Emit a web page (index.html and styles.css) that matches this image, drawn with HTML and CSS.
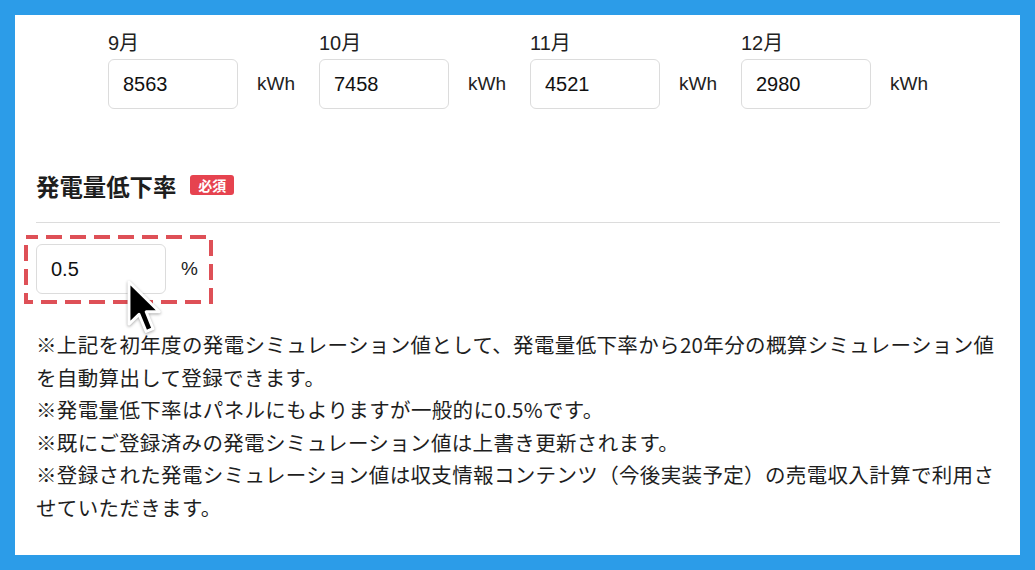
FILE: index.html
```html
<!DOCTYPE html>
<html lang="ja">
<head>
<meta charset="utf-8">
<title>発電シミュレーション</title>
<link rel="stylesheet" href="styles.css">
</head>
<body>
<div class="panel">
  <div class="months">
    <div class="month">
      <div class="month-label">9月</div>
      <div class="field">
        <input class="num-input" type="text" value="8563">
        <span class="unit">kWh</span>
      </div>
    </div>
    <div class="month">
      <div class="month-label">10月</div>
      <div class="field">
        <input class="num-input" type="text" value="7458">
        <span class="unit">kWh</span>
      </div>
    </div>
    <div class="month">
      <div class="month-label">11月</div>
      <div class="field">
        <input class="num-input" type="text" value="4521">
        <span class="unit">kWh</span>
      </div>
    </div>
    <div class="month">
      <div class="month-label">12月</div>
      <div class="field">
        <input class="num-input" type="text" value="2980">
        <span class="unit">kWh</span>
      </div>
    </div>
  </div>

  <div class="section-head">
    <h2 class="section-title">発電量低下率</h2>
    <span class="badge">必須</span>
  </div>

  <div class="highlight">
    <svg class="highlight-frame" viewBox="0 0 189 69" aria-hidden="true">
      <rect x="2" y="2" width="185" height="65" fill="none" stroke="#de5057" stroke-width="4" stroke-dasharray="16 8" stroke-dashoffset="4"/>
    </svg>
    <div class="field">
      <input class="num-input" type="text" value="0.5">
      <span class="unit">%</span>
    </div>
    <svg class="cursor" viewBox="-1 -1 14 22" aria-hidden="true">
      <path d="M0.5 0.5 L0.5 16.5 L4.3 12.8 L7 19.3 L9.6 18.2 L7 11.8 L12 11.8 Z" fill="#000" stroke="#fff" stroke-width="1.1" stroke-linejoin="round"/>
    </svg>
  </div>

  <div class="notes">
    <p>※上記を初年度の発電シミュレーション値として、発電量低下率から20年分の概算シミュレーション値を自動算出して登録できます。</p>
    <p>※発電量低下率はパネルにもよりますが一般的に0.5%です。</p>
    <p>※既にご登録済みの発電シミュレーション値は上書き更新されます。</p>
    <p>※登録された発電シミュレーション値は収支情報コンテンツ（今後実装予定）の売電収入計算で利用させていただきます。</p>
  </div>
</div>
</body>
</html>
```

FILE: styles.css
```css
html, body {
  margin: 0;
  padding: 0;
}

body {
  background: #2c9ce8;
  padding: 15px;
  font-family: "Liberation Sans", "Noto Sans CJK JP", sans-serif;
  color: #222;
}

.panel {
  background: #fff;
  height: 540px;
  box-sizing: border-box;
  padding: 15px 20px 0 21px;
  overflow: hidden;
}

/* monthly generation inputs */
.months {
  display: flex;
  margin-left: 72px;
}

.month {
  width: 211px;
  flex: none;
}

.month-label {
  font-size: 20px;
  line-height: 26px;
  margin-bottom: 3px;
}

.field {
  display: flex;
  align-items: center;
  gap: 19px;
}

.num-input {
  width: 130px;
  height: 50px;
  box-sizing: border-box;
  border: 1px solid #dcdcdc;
  border-radius: 6px;
  padding: 0 0 0 14px;
  font-family: "Liberation Sans", sans-serif;
  font-size: 20px;
  color: #111;
  background: #fff;
  outline: none;
}

.unit {
  font-size: 19px;
  color: #222;
}

/* rate section */
.section-head {
  display: flex;
  align-items: center;
  gap: 14px;
  margin-top: 61px;
  padding-bottom: 20px;
  border-bottom: 1px solid #dcdcdc;
}

.section-title {
  margin: 0;
  font-size: 23.4px;
  line-height: 32px;
  font-weight: 700;
  font-family: "Noto Sans CJK JP", sans-serif;
  color: #1e1e1e;
}

.badge {
  background: #e6434f;
  color: #fff;
  font-family: "Noto Sans CJK JP", sans-serif;
  font-weight: 700;
  font-size: 14px;
  line-height: 20px;
  padding: 0 8px;
  border-radius: 3px;
  margin-top: -3px;
}

.highlight {
  position: relative;
  width: 189px;
  height: 69px;
  box-sizing: border-box;
  margin: 12px 0 0 -12px;
  padding: 9px 0 0 12px;
}

.highlight .field {
  gap: 15px;
}

.highlight-frame {
  position: absolute;
  left: 0;
  top: 0;
  width: 189px;
  height: 69px;
}

.cursor {
  position: absolute;
  left: 101px;
  top: 43px;
  width: 37px;
  height: 58px;
  filter: drop-shadow(0 1px 1.5px rgba(0, 0, 0, 0.35));
}

/* explanatory notes */
.notes {
  margin-top: 24px;
  font-family: "Noto Sans CJK JP", sans-serif;
  font-size: 20.5px;
  line-height: 32.5px;
  letter-spacing: 0.35px;
  color: #1e1e1e;
}

.notes p {
  margin: 0;
}
```
